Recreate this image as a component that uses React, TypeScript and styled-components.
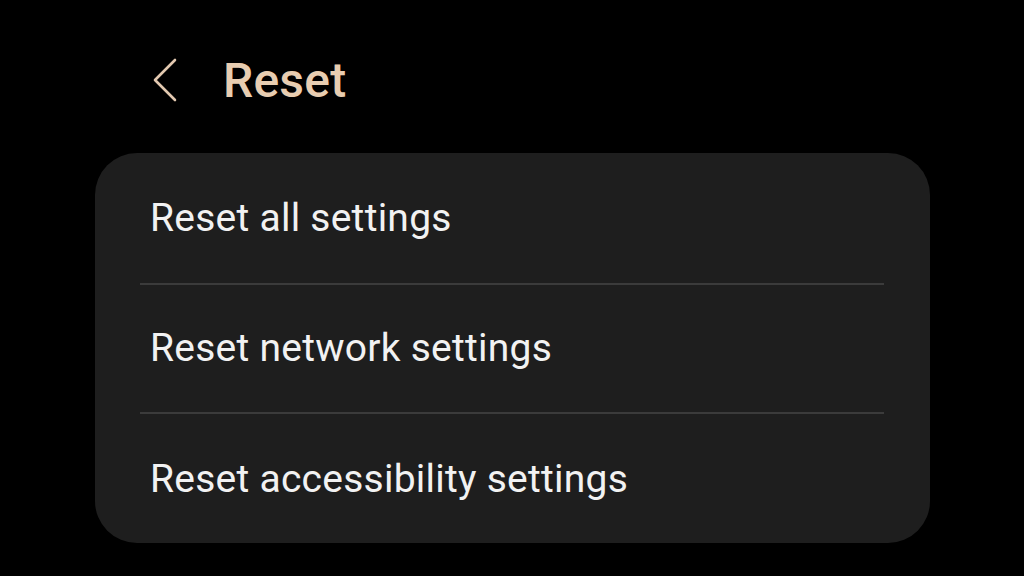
import React from 'react';
import styled, { createGlobalStyle } from 'styled-components';

const GlobalStyle = createGlobalStyle`
  html, body {
    margin: 0;
    padding: 0;
    background: #000;
  }
  body {
    font-family: Roboto, "Noto Sans", Arial, sans-serif;
  }
`;

const Screen = styled.div`
  width: 1024px;
  height: 576px;
  background: #000;
  box-sizing: border-box;
  padding: 55px 94px 0 95px;
  display: flex;
  flex-direction: column;
`;

const Header = styled.div`
  display: flex;
  align-items: center;
  height: 50px;
  padding-left: 56px;
  gap: 44px;
  margin-bottom: 48px;
`;

const BackButton = styled.button`
  background: none;
  border: none;
  padding: 0;
  width: 28px;
  height: 46px;
  display: flex;
  align-items: center;
  cursor: pointer;
`;

const Title = styled.h1`
  margin: 0;
  font-size: 48px;
  font-weight: 500;
  color: #e8cdb1;
  letter-spacing: 0.2px;
`;

const Card = styled.div`
  background: #1e1e1e;
  border-radius: 42px;
  padding: 2px 46px 0 45px;
  display: flex;
  flex-direction: column;
`;

const Row = styled.div<{ $h: number; $last?: boolean }>`
  height: ${(p) => p.$h}px;
  display: flex;
  align-items: center;
  padding-left: 10px;
  border-bottom: ${(p) => (p.$last ? 'none' : '2px solid #3b3b3b')};
  box-sizing: border-box;
  font-size: 39px;
  letter-spacing: 0.25px;
  color: #f2f2f2;
  padding-bottom: ${(p) => (p.$last ? '0' : '2px')};
`;

const items = [
  { label: 'Reset all settings', h: 130 },
  { label: 'Reset network settings', h: 129 },
  { label: 'Reset accessibility settings', h: 129 },
];

export default function App() {
  return (
    <>
      <GlobalStyle />
      <Screen>
        <Header>
          <BackButton aria-label="Back">
            <svg width="28" height="46" viewBox="0 0 28 46" fill="none">
              <path d="M24 3 L4 23 L24 43" stroke="#e3c9b0" strokeWidth="2.6" strokeLinecap="round" strokeLinejoin="round" />
            </svg>
          </BackButton>
          <Title>Reset</Title>
        </Header>
        <Card>
          {items.map((it, i) => (
            <Row key={it.label} $h={it.h} $last={i === items.length - 1}>
              {it.label}
            </Row>
          ))}
        </Card>
      </Screen>
    </>
  );
}
